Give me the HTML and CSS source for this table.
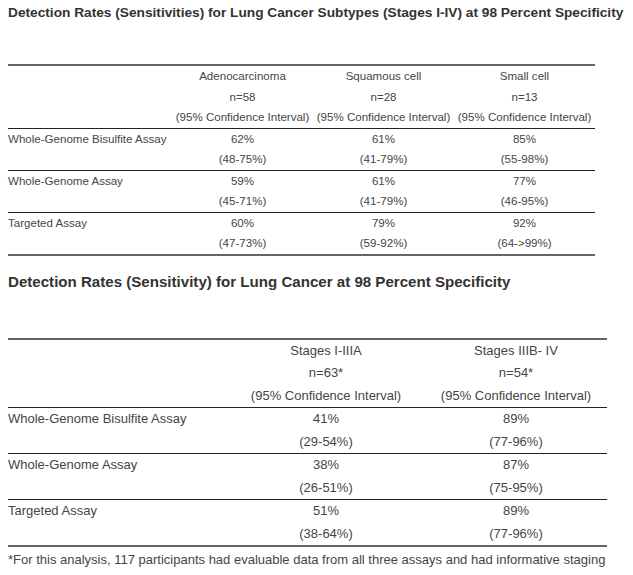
FILE: index.html
```html
<!DOCTYPE html>
<html>
<head>
<meta charset="utf-8">
<link rel="stylesheet" href="styles.css">
</head>
<body>
<h2 class="title title-first">Detection Rates (Sensitivities) for Lung Cancer Subtypes (Stages I-IV) at 98 Percent Specificity</h2>
<table class="tbl tbl-a">
  <colgroup><col class="a1"><col class="a2"><col class="a3"><col class="a4"></colgroup>
  <thead>
    <tr>
      <th></th>
      <th>Adenocarcinoma<br>n=58<br>(95% Confidence Interval)</th>
      <th>Squamous cell<br>n=28<br>(95% Confidence Interval)</th>
      <th>Small cell<br>n=13<br>(95% Confidence Interval)</th>
    </tr>
  </thead>
  <tbody>
    <tr><td class="label">Whole-Genome Bisulfite Assay</td><td>62%<br>(48-75%)</td><td>61%<br>(41-79%)</td><td>85%<br>(55-98%)</td></tr>
    <tr><td class="label">Whole-Genome Assay</td><td>59%<br>(45-71%)</td><td>61%<br>(41-79%)</td><td>77%<br>(46-95%)</td></tr>
    <tr><td class="label">Targeted Assay</td><td>60%<br>(47-73%)</td><td>79%<br>(59-92%)</td><td>92%<br>(64-&gt;99%)</td></tr>
  </tbody>
</table>
<h2 class="title title-second">Detection Rates (Sensitivity) for Lung Cancer at 98 Percent Specificity</h2>
<table class="tbl tbl-b">
  <colgroup><col class="b1"><col class="b2"><col class="b3"></colgroup>
  <thead>
    <tr>
      <th></th>
      <th>Stages I-IIIA<br>n=63*<br>(95% Confidence Interval)</th>
      <th>Stages IIIB- IV<br>n=54*<br>(95% Confidence Interval)</th>
    </tr>
  </thead>
  <tbody>
    <tr><td class="label">Whole-Genome Bisulfite Assay</td><td>41%<br>(29-54%)</td><td>89%<br>(77-96%)</td></tr>
    <tr><td class="label">Whole-Genome Assay</td><td>38%<br>(26-51%)</td><td>87%<br>(75-95%)</td></tr>
    <tr><td class="label">Targeted Assay</td><td>51%<br>(38-64%)</td><td>89%<br>(77-96%)</td></tr>
  </tbody>
</table>
<p class="note">*For this analysis, 117 participants had evaluable data from all three assays and had informative staging</p>
</body>
</html>
```

FILE: styles.css
```css
html, body {
  margin: 0;
  padding: 0;
  background: #ffffff;
}
body {
  padding: 0 8px;
  font-family: "Liberation Sans", Arial, sans-serif;
  color: #454545;
}
.title {
  font-weight: bold;
  color: #333;
  line-height: 20px;
  margin: 0;
  white-space: nowrap;
}
.title-first {
  font-size: 13.7px;
  padding-top: 3px;
  margin-bottom: 41px;
}
.title-second {
  font-size: 15.1px;
  margin-top: 16px;
  margin-bottom: 46px;
}
.tbl {
  border-collapse: collapse;
  table-layout: fixed;
  border-top: 2px solid #666;
  border-bottom: 2px solid #666;
}
.tbl th, .tbl td {
  padding: 0;
  font-weight: normal;
  text-align: center;
  vertical-align: top;
  white-space: nowrap;
}
.tbl td.label {
  text-align: left;
}
.tbl thead tr {
  border-bottom: 1px solid #222;
}
.tbl tbody tr {
  border-bottom: 1px solid #222;
}
.tbl tbody tr:last-child {
  border-bottom: none;
}
.tbl-a {
  width: 587px;
  font-size: 11.55px;
  line-height: 20.5px;
}
.a1 { width: 164px; }
.a2 { width: 141px; }
.a3 { width: 141px; }
.a4 { width: 141px; }
.tbl-b {
  width: 599px;
  font-size: 13px;
  line-height: 22.5px;
}
.b1 { width: 219px; }
.b2 { width: 198px; }
.b3 { width: 182px; }
.note {
  margin: 0;
  font-size: 13px;
  line-height: 22.5px;
  padding-top: 2px;
  white-space: nowrap;
}
```
